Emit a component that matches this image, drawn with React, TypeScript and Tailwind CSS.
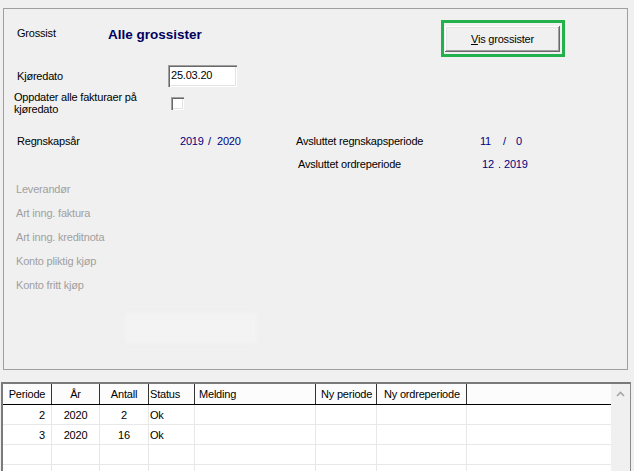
import React from "react";

const cols = [
  { w: "w-[49px]", label: "Periode", h: "justify-center", b: "justify-end pr-[6px]" },
  { w: "w-[48px]", label: "År", h: "justify-center", b: "justify-center" },
  { w: "w-[49px]", label: "Antall", h: "justify-center", b: "justify-center" },
  { w: "w-[46px]", label: "Status", h: "justify-start pl-[1px]", b: "justify-start pl-[1px]" },
  { w: "w-[121px]", label: "Melding", h: "justify-start pl-[4px]", b: "justify-start pl-[4px]" },
  { w: "w-[61px]", label: "Ny periode", h: "justify-start pl-[5px]", b: "justify-start pl-[5px]" },
  { w: "w-[90px]", label: "Ny ordreperiode", h: "justify-start pl-[7px]", b: "justify-start pl-[7px]" },
];

const rows: string[][] = [
  ["2", "2020", "2", "Ok", "", "", ""],
  ["3", "2020", "16", "Ok", "", "", ""],
  ["", "", "", "", "", "", ""],
  ["", "", "", "", "", "", ""],
];

export default function App() {
  return (
    <div className="w-[634px] h-[471px] overflow-hidden bg-[#f0f0f0] font-['Liberation_Sans',Arial,sans-serif] text-[11px] tracking-[-0.2px] text-black pt-[8px]">
      {/* Top group panel */}
      <div className="ml-[3px] w-[625px] h-[362px] border border-[#a0a0a0] overflow-hidden">
        {/* Row A */}
        <div className="mt-[11px] flex h-[37px]">
          <div className="ml-[13px] w-[91px] mt-[7px] leading-[13px]">Grossist</div>
          <div className="w-[333px] mt-[6px] text-[13.5px] tracking-normal font-bold leading-[17px] text-[#000060]">
            Alle grossister
          </div>
          <div className="w-[124px] h-[37px] border-[3px] border-[#22b14c] pl-[1px] pt-[3px]">
            <div className="w-[115px] h-[26px] bg-[#f0f0f0] flex items-center justify-center shadow-[inset_-1px_-1px_0_#696969,inset_1px_1px_0_#ffffff,inset_-2px_-2px_0_#a0a0a0,inset_2px_2px_0_#e3e3e3] leading-[13px]">
              <span>
                <span className="underline">V</span>is grossister
              </span>
            </div>
          </div>
        </div>

        {/* Row B */}
        <div className="mt-[8px] flex h-[22px]">
          <div className="ml-[13px] w-[151px] mt-[5px] leading-[13px]">Kjøredato</div>
          <div className="w-[69px] h-[22px] bg-white pl-[3px] pt-[2px] leading-[16px] shadow-[inset_1px_1px_0_#a0a0a0,inset_2px_2px_0_#696969,inset_-1px_-1px_0_#ffffff,inset_-2px_-2px_0_#e3e3e3]">
            25.03.20
          </div>
        </div>

        {/* Row C */}
        <div className="mt-[4px] flex h-[26px]">
          <div className="ml-[10px] w-[157px] leading-[12px]">
            Oppdater alle fakturaer på
            <br />
            kjøredato
          </div>
          <div className="mt-[6px] w-[13px] h-[13px] bg-white shadow-[inset_1px_1px_0_#a0a0a0,inset_2px_2px_0_#696969,inset_-1px_-1px_0_#ffffff,inset_-2px_-2px_0_#e3e3e3]" />
        </div>

        {/* Row D */}
        <div className="mt-[18px] flex leading-[13px]">
          <div className="ml-[13px] w-[163px]">Regnskapsår</div>
          <div className="w-[116px] flex text-[#000080]">
            <span className="w-[28px]">2019</span>
            <span className="w-[9px]">/</span>
            <span>2020</span>
          </div>
          <div className="w-[184px]">Avsluttet regnskapsperiode</div>
          <div className="flex text-[#000080]">
            <span className="w-[23px]">11</span>
            <span className="w-[13px]">/</span>
            <span>0</span>
          </div>
        </div>

        {/* Row E */}
        <div className="mt-[10px] flex leading-[13px]">
          <div className="ml-[294px] w-[182px]">Avsluttet ordreperiode</div>
          <div className="flex text-[#000080]">
            <span className="ml-[2px] w-[16px]">12</span>
            <span className="w-[6px]">.</span>
            <span>2019</span>
          </div>
        </div>

        {/* Disabled labels */}
        <div className="mt-[12px] ml-[12px] flex flex-col text-[#a0a0a0] leading-[13px]">
          <div className="h-[24px]">Leverandør</div>
          <div className="h-[24px]">Art inng. faktura</div>
          <div className="h-[24px]">Art inng. kreditnota</div>
          <div className="h-[24px]">Konto pliktig kjøp</div>
          <div className="h-[24px]">Konto fritt kjøp</div>
        </div>

        <div className="mt-[10px] ml-[121px] w-[132px] h-[30px] bg-[#f3f3f3] blur-[2px]" />
      </div>

      {/* Grid */}
      <div className="mt-[12px] ml-[1px] w-[630px] h-[100px] border-t-2 border-l-2 border-t-[#7a7a7a] border-l-[#7a7a7a] border-r border-r-[#8a8a8a] flex">
        <div className="w-[608px] bg-white">
          {/* Header */}
          <div className="flex h-[21px] border-b border-black bg-[#fcfcfc]">
            {cols.map((c) => (
              <div
                key={c.label}
                className={`${c.w} h-[20px] border-r border-[#333333] flex items-center leading-[20px] ${c.h}`}
              >
                {c.label}
              </div>
            ))}
            <div className="flex-1" />
          </div>
          {/* Body */}
          {rows.map((r, i) => (
            <div key={i} className="flex h-[20px] border-b border-[#e8e8e8]">
              {cols.map((c, j) => (
                <div
                  key={j}
                  className={`${c.w} h-[19px] border-r border-[#e8e8e8] flex items-center leading-[19px] pt-[1px] ${c.b}`}
                >
                  {r[j]}
                </div>
              ))}
              <div className="flex-1" />
            </div>
          ))}
        </div>
        {/* Scrollbar */}
        <div className="w-[19px] bg-[#f0f0f0] flex flex-col items-center">
          <div className="h-[20px] w-full flex items-center justify-center">
            <svg width="9" height="6" viewBox="0 0 9 6" className="mr-[1px]">
              <path d="M1 5 L4.5 1.5 L8 5" fill="none" stroke="#a6a6a6" strokeWidth="1.6" />
            </svg>
          </div>
        </div>
      </div>
    </div>
  );
}
